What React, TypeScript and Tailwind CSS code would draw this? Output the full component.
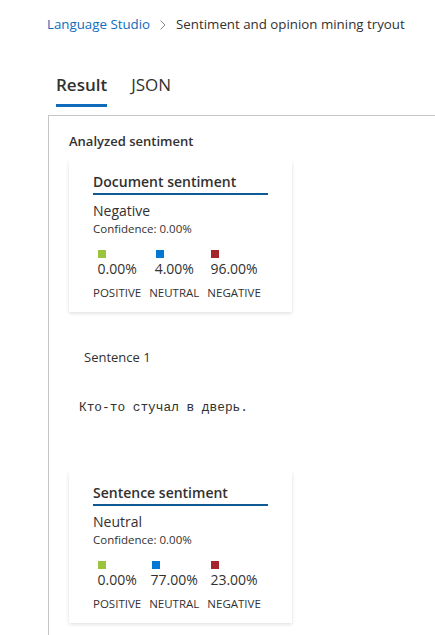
import React from 'react';

type Score = { label: string; value: string; color: string };

function SentimentCard({ title, result, scores }: { title: string; result: string; scores: Score[] }) {
  return (
    <div className="w-[223px] bg-white px-6 pt-[12px] pb-[11px] shadow-[0_1.6px_3.6px_rgba(0,0,0,0.13),0_0.3px_0.9px_rgba(0,0,0,0.11)]">
      <div className="border-b-2 border-[#0f5a94] pb-[1px] text-[14px] font-semibold leading-[20px] text-[#323130]">{title}</div>
      <div className="mt-[6px] text-[14px] leading-[20px] text-[#323130]">{result}</div>
      <div className="text-[11.5px] leading-[16px] text-[#323130]">Confidence: 0.00%</div>
      <div className="mt-[13px] flex gap-[8px]">
        {scores.map((s) => (
          <div key={s.label} className="flex flex-col items-center">
            <div className="flex flex-col items-start">
              <div className="ml-[1px] h-[8px] w-[8px]" style={{ backgroundColor: s.color }} />
              <div className="mt-[1px] text-[14px] leading-[20px] text-[#323130]">{s.value}</div>
            </div>
            <div className="mt-[6px] text-[11.5px] leading-[16px] text-[#323130]">{s.label}</div>
          </div>
        ))}
      </div>
    </div>
  );
}

export default function App() {
  return (
    <div className="h-[635px] w-[435px] overflow-hidden bg-white font-['Open_Sans',sans-serif] text-[#323130]">
      {/* breadcrumb */}
      <div className="mt-[15px] flex h-[20px] items-center pl-[47px] text-[13.3px]">
        <span className="text-[#0f6cbd]">Language Studio</span>
        <svg className="mx-[9px]" width="8" height="12" viewBox="0 0 8 12">
          <path d="M1.5 1.5 L6 6 L1.5 10.5" fill="none" stroke="#8a8886" strokeWidth="1" />
        </svg>
        <span>Sentiment and opinion mining tryout</span>
      </div>

      {/* tabs */}
      <div className="mt-[38px] flex gap-[24px] pl-[56px]">
        <div className="border-b-[3px] border-[#0f6cbd] pb-[7px] text-[17px] font-semibold leading-[24px]">Result</div>
        <div className="pb-[7px] text-[17px] leading-[24px]">JSON</div>
      </div>

      {/* panel */}
      <div className="ml-[48px] mt-[8px] border-l border-t border-[#c8c6c4] pl-[20px] pt-[16px]">
        <div className="text-[13px] font-semibold leading-[18px]">Analyzed sentiment</div>
        <div className="mt-[10px]">
          <SentimentCard
            title="Document sentiment"
            result="Negative"
            scores={[
              { label: 'POSITIVE', value: '0.00%', color: '#9ac33e' },
              { label: 'NEUTRAL', value: '4.00%', color: '#0078d4' },
              { label: 'NEGATIVE', value: '96.00%', color: '#a4262c' },
            ]}
          />
        </div>
        <div className="mt-[36px] pl-[15px] text-[13px] leading-[18px]">Sentence 1</div>
        <div className="mt-[33px] pl-[10px] font-['Liberation_Mono',monospace] text-[12.8px] leading-[18px]">Кто-то стучал в дверь.</div>
        <div className="mt-[54px] pb-[20px]">
          <SentimentCard
            title="Sentence sentiment"
            result="Neutral"
            scores={[
              { label: 'POSITIVE', value: '0.00%', color: '#9ac33e' },
              { label: 'NEUTRAL', value: '77.00%', color: '#0078d4' },
              { label: 'NEGATIVE', value: '23.00%', color: '#a4262c' },
            ]}
          />
        </div>
      </div>
    </div>
  );
}
